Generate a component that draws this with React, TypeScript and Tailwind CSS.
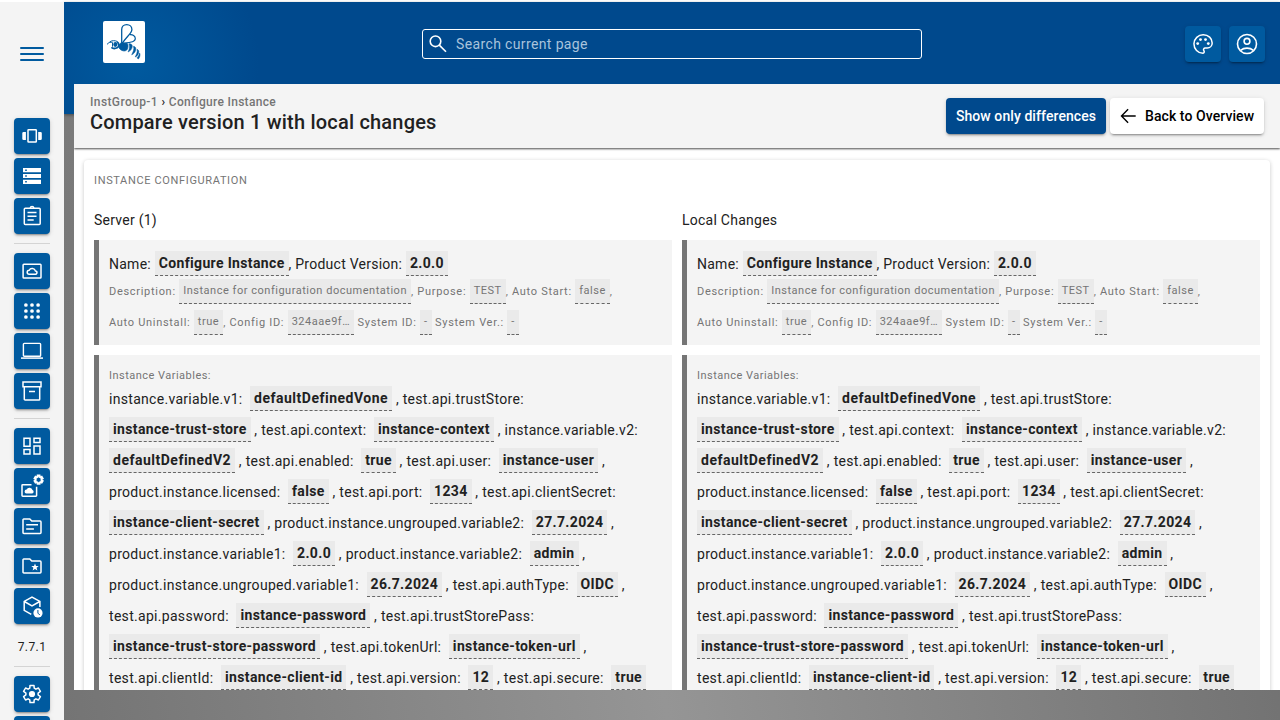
import type { ReactNode } from 'react';

function Icon({ children, width = 1.4 }: { children: ReactNode; width?: number }) {
  return (
    <svg width="24" height="24" viewBox="0 0 24 24" fill="none" stroke="currentColor" strokeWidth={width} className="shrink-0 overflow-visible">
      {children}
    </svg>
  );
}

function gearPath(outer: number, inner: number, tooth: number, valley: number) {
  const points: string[] = [];
  for (let k = 0; k < 6; k++) {
    const corners: [number, number][] = [[-valley, inner], [-tooth, outer], [tooth, outer], [valley, inner]];
    corners.forEach(([offset, radius]) => {
      const angle = ((60 * k + offset) * Math.PI) / 180;
      points.push(`${(radius * Math.sin(angle)).toFixed(2)} ${(-radius * Math.cos(angle)).toFixed(2)}`);
    });
  }
  return `M${points.join('L')}Z`;
}

const carousel = (
  <Icon width={1.5}>
    <rect x="8" y="5.7" width="8.3" height="12.4" rx="0.6" />
    <path d="M2.3 9.3A1.300 1.300 0 0 1 3.600 8H5.900v8H3.600a1.300 1.300 0 0 1-1.300-1.300zM18.200 8h2.300a1.300 1.300 0 0 1 1.300 1.300v5.400a1.300 1.300 0 0 1-1.300 1.300h-2.300z" fill="currentColor" stroke="none" />
  </Icon>
);

const storage = (
  <Icon>
    <path
      d="M3 4h18v4.300H3zM3 9.900h18v4.200H3zM3 15.700h18V20H3zM5.200 5.400v1.600h1.600V5.400zM5.200 11.200v1.600h1.600v-1.600zM5.200 17v1.600h1.600V17z"
      fill="currentColor"
      fillRule="evenodd"
      stroke="none"
    />
  </Icon>
);

const clipboard = (
  <Icon width={1.5}>
    <rect x="4.3" y="4.2" width="15.9" height="16.2" rx="1" />
    <path d="M10.200 4a1.900 1.900 0 0 1 3.700 0M7.500 8.500h9M7.500 12.300h9M7.500 16.100h6.200" />
  </Icon>
);

const cloudWindow = (
  <Icon width={1.5}>
    <rect x="3.1" y="5.3" width="17.9" height="13.7" rx="0.8" />
    <path d="M9.200 15.300h5.900a1.700 1.700 0 0 0 .3-3.400 3.300 3.300 0 0 0-6.200-.6 2 2 0 0 0 0 4z" />
  </Icon>
);

const apps = (
  <Icon>
    {[6, 12, 18].map((y) => [5.9, 12, 18.1].map((x) => <circle key={`${x}-${y}`} cx={x} cy={y} r="1.85" fill="currentColor" stroke="none" />))}
  </Icon>
);

const laptop = (
  <Icon>
    <rect x="3.4" y="4.4" width="17.2" height="12.9" rx="0.9" />
    <path d="M1 19.100h22" strokeWidth="1.5" />
  </Icon>
);

const archive = (
  <Icon width={1.5}>
    <path d="M3 3h18v4.700H3zM4.300 7.700V20.200a.8.800 0 0 0 .8.800h13.800a.8.800 0 0 0 .8-.8V7.700M9 12.500h6" />
  </Icon>
);

const dashboard = (
  <Icon width={1.5}>
    <path d="M4 4.200h6v8H4zM14 4.200h6v4.400h-6zM4 15.600h6v4.400H4zM14 12h6v8h-6z" />
  </Icon>
);

const cloudGear = (
  <Icon width={1.5}>
    <path d="M11.500 10.700H2.700a.7.700 0 0 0-.7.700v10.100a.7.700 0 0 0 .7.700h13.200a.7.700 0 0 0 .7-.7v-8.700" />
    <path d="M6.400 19.400h5.700a1.700 1.700 0 0 0 .4-3.300 3.100 3.100 0 0 0-5.900-.5 1.900 1.900 0 0 0-.2 3.800z" fill="currentColor" stroke="none" />
    <path d={gearPath(4.2, 3, 13, 21)} transform="translate(18.6 5.7)" strokeWidth="2" />
  </Icon>
);

const topic = (
  <Icon width={1.5}>
    <path d="M3 6.200V18.500a.9.900 0 0 0 .9.900h16.200a.9.900 0 0 0 .9-.9V8a.9.900 0 0 0-.9-.9h-8.300L9.800 5H3.900a.9.900 0 0 0-.9 1.200zM6.200 10.800h11.800M6.200 15h7.700" />
  </Icon>
);

const folderStar = (
  <Icon width={1.5}>
    <path d="M3 6.200V18.100a.9.900 0 0 0 .9.900h16.200a.9.900 0 0 0 .9-.9V8a.9.900 0 0 0-.9-.9h-8.300L9.800 5H3.900a.9.900 0 0 0-.9 1.200z" />
    <path d="M15 9.500l1 2.500 2.700.1-2.100 1.700.8 2.600-2.400-1.500-2.400 1.500.8-2.600-2.100-1.700 2.700-.1z" fill="currentColor" stroke="none" />
  </Icon>
);

const boxClock = (
  <Icon width={1.5}>
    <path d="M11.300 20.400 4.200 16.300V7.400L12 3l7.900 4.400V13M4.300 7.500 12 11.900l7.800-4.400" />
    <circle cx="18" cy="18.9" r="4.6" fill="currentColor" stroke="none" />
    <path d="M17.900 16v3.100l1.900 1.900" stroke="#005a9f" strokeWidth="1" />
  </Icon>
);

const settings = (
  <Icon width={1.5}>
    <path d={gearPath(8.8, 6.2, 13, 21)} transform="translate(12 12)" strokeLinejoin="round" />
    <circle cx="12" cy="12" r="3.1" fill="currentColor" stroke="none" />
  </Icon>
);

const palette = (
  <Icon width={1.5}>
    <path d="M12 21.200a9.200 9.200 0 1 1 .3-18.400c5 0 8.900 3.500 8.900 8.200 0 2.900-2.200 5-5 5h-2a1.700 1.700 0 0 0-1.300 2.800c.7.900.3 2.400-.9 2.400z" />
    <g fill="currentColor" stroke="none">
      <circle cx="6.7" cy="11.6" r="1.4" />
      <circle cx="9.5" cy="7.6" r="1.4" />
      <circle cx="14.5" cy="7.6" r="1.4" />
      <circle cx="17.3" cy="11.6" r="1.4" />
    </g>
  </Icon>
);

const account = (
  <Icon width={1.6}>
    <circle cx="12" cy="12" r="9.5" />
    <circle cx="12" cy="9.3" r="2.9" />
    <path d="M5.600 18.400c1.800-1.500 4-2.300 6.400-2.300s4.600.8 6.400 2.300" />
  </Icon>
);

function BeeLogo() {
  return (
    <svg width="42" height="42" viewBox="0 0 42 42" className="rounded-[2px] bg-white text-[#005a9f]" fill="none" stroke="currentColor">
      <path d="M18.700 22.300V8.500c0-3 2-4.900 5-4.900s5.200 2 5.200 4.900c0 4.200-6.700 8-9.300 13.600" strokeWidth="1.3" />
      <path d="M26.700 13.700c3-.4 5.600 1.200 5.600 3.900 0 3.200-3.300 3.600-12.300 4.700" strokeWidth="1.2" />
      <path d="M4 23.400c1.500-1.900 3.600-2.600 5.600-2M6.600 20.900c2.600-1.700 5.300-1.500 8-.3" strokeWidth="1" />
      <path d="M8.400 26.300c1.200 1.100 4 1.300 5.800.5 2.100-.9 2.100-4.600 0-5.800" strokeWidth="1.8" />
      <ellipse cx="12.3" cy="23.5" rx="2" ry="2.4" fill="currentColor" stroke="none" />
      <path d="M9.500 21.700v4" strokeWidth="1" />
      <path d="M17.500 22.300c1.700-.6 5.200.2 6.700.2 1.100 1 .9 3.800.3 5.300-.7 1.800-2.400 2.300-4.400 2-2-.4-3.600-1.700-4.100-3.300-.4-1.600.1-3.500 1.500-4.200z" fill="currentColor" stroke="currentColor" strokeWidth="0.8" />
      <path
        d="M26 22.700c2.600-.2 3.600 1.300 3.200 3.400-.4 2.200-2 4.100-4.200 4.900 1.300-2.600 2.300-5.300 1-8.300zM30.500 25.300c2.300.4 2.800 2.100 2.100 4.200-.6 1.900-2 3.500-3.900 4.300 1.100-2.600 2.900-5.300 1.800-8.500zM34 28.300c1.900.7 2.200 2.300 1.500 4.100-.6 1.600-1.700 2.900-3.300 3.600 1-2.400 2.700-4.800 1.800-7.700zM36.600 32c.9 1.600.3 4.300-1.200 6-.7-.3-1.200-.8-1.300-1.300 1.200-1.300 2.200-2.900 2.500-4.700z"
        fill="currentColor"
        stroke="currentColor"
        strokeWidth="0.5"
      />
    </svg>
  );
}

function IconButton({ children }: { children: ReactNode }) {
  return (
    <button className="flex size-9 shrink-0 items-center justify-center rounded bg-[#005a9f] text-white shadow-[0_3px_1px_-2px_rgba(0,0,0,.2),0_2px_2px_0_rgba(0,0,0,.14),0_1px_5px_0_rgba(0,0,0,.12)]">
      {children}
    </button>
  );
}

function Divider() {
  return <div className="my-[5px] h-px w-9 shrink-0 bg-[#d4d4d4]" />;
}

function Sidebar() {
  return (
    <aside className="z-10 flex w-16 shrink-0 flex-col items-center overflow-hidden bg-[#f4f4f4]">
      <div className="mt-[45px] mb-[57px] flex w-6 shrink-0 flex-col gap-1">
        <div className="h-0.5 rounded bg-[#005a9f]" />
        <div className="h-0.5 rounded bg-[#005a9f]" />
        <div className="h-0.5 rounded bg-[#005a9f]" />
      </div>
      <div className="flex flex-col items-center gap-1">
        <IconButton>{carousel}</IconButton>
        <IconButton>{storage}</IconButton>
        <IconButton>{clipboard}</IconButton>
        <Divider />
        <IconButton>{cloudWindow}</IconButton>
        <IconButton>{apps}</IconButton>
        <IconButton>{laptop}</IconButton>
        <IconButton>{archive}</IconButton>
        <Divider />
        <IconButton>{dashboard}</IconButton>
        <IconButton>{cloudGear}</IconButton>
        <IconButton>{topic}</IconButton>
        <IconButton>{folderStar}</IconButton>
        <IconButton>{boxClock}</IconButton>
        <div className="mt-[9px] h-5 text-[12px] leading-5 tracking-[0.4px] text-[#212121]">7.7.1</div>
        <Divider />
        <IconButton>{settings}</IconButton>
        <IconButton>{apps}</IconButton>
      </div>
    </aside>
  );
}

function Value({ children, strong = false }: { children: ReactNode; strong?: boolean }) {
  return (
    <span
      className={
        strong
          ? 'inline-block h-[25px] border-b border-dashed border-[#666] bg-[#eaeaea] px-1 align-[1px] leading-6 font-bold tracking-[0.35px] text-[#212121]'
          : 'inline-block h-[25px] border-b border-dashed border-[#666] bg-[#eaeaea] px-1 align-[1px] leading-6 tracking-[0.52px]'
      }
    >
      {children}
    </span>
  );
}

const variables: [string, string][] = [
  ['instance.variable.v1', 'defaultDefinedVone'],
  ['test.api.trustStore', 'instance-trust-store'],
  ['test.api.context', 'instance-context'],
  ['instance.variable.v2', 'defaultDefinedV2'],
  ['test.api.enabled', 'true'],
  ['test.api.user', 'instance-user'],
  ['product.instance.licensed', 'false'],
  ['test.api.port', '1234'],
  ['test.api.clientSecret', 'instance-client-secret'],
  ['product.instance.ungrouped.variable2', '27.7.2024'],
  ['product.instance.variable1', '2.0.0'],
  ['product.instance.variable2', 'admin'],
  ['product.instance.ungrouped.variable1', '26.7.2024'],
  ['test.api.authType', 'OIDC'],
  ['test.api.password', 'instance-password'],
  ['test.api.trustStorePass', 'instance-trust-store-password'],
  ['test.api.tokenUrl', 'instance-token-url'],
  ['test.api.clientId', 'instance-client-id'],
  ['test.api.version', '12'],
  ['test.api.secure', 'true'],
];

function Column({ title }: { title: string }) {
  return (
    <div className="flex w-[578px] flex-col gap-2.5">
      <div className="h-5 text-[14px] leading-5">{title}</div>
      <section className="h-[105px] border-l-[5px] border-[#757575] bg-[#f4f4f4] px-2.5 pt-[9px]">
        <div className="h-[27px] leading-[31px]">
          Name: <Value strong>Configure Instance</Value>, Product Version: <Value strong>2.0.0</Value>
        </div>
        <div className="text-[11px] leading-[31px] tracking-[0.7px] text-[#757575]">
          Description: <Value>Instance for configuration documentation</Value>, Purpose: <Value>TEST</Value>, Auto Start:{' '}
          <Value>false</Value>, <br />
          Auto Uninstall: <Value>true</Value>, Config ID: <Value>324aae9f…</Value> System ID: <Value>-</Value> System Ver.:{' '}
          <Value>-</Value>
        </div>
      </section>
      <section className="border-l-[5px] border-[#757575] bg-[#f4f4f4] px-2.5 pt-[11px]">
        <div className="h-[18px] text-[11px] leading-5 tracking-[0.48px] text-[#757575]">Instance Variables:</div>
        <div className="leading-[31px] tracking-[0.3px]">
          {variables.map(([name, value]) => (
            <span key={name}>
              {name}:&nbsp; <Value strong>{value.startsWith('default') ? <span className="tracking-[0.5px]">{value}</span> : value}</Value>
              {name === 'test.api.secure' ? '' : ' , '}
            </span>
          ))}
        </div>
      </section>
    </div>
  );
}

function Header() {
  return (
    <header className="flex h-[82px] shrink-0 items-center pt-0.5">
      <div className="mb-1 ml-[39px]">
        <BeeLogo />
      </div>
      <div className="ml-[277px] flex h-[30px] w-[500px] items-center gap-[6px] rounded-[3px] border border-white pl-[3px] text-white">
        <Icon width={1.6}>
          <circle cx="9.5" cy="9.3" r="5.3" />
          <path d="M13.300 13.100 20 19.800" />
        </Icon>
        <span className="text-[14px] tracking-[0.37px] text-[#a9c3dc]">Search current page</span>
      </div>
      <div className="mr-[15px] ml-auto flex gap-2">
        <IconButton>{palette}</IconButton>
        <IconButton>{account}</IconButton>
      </div>
    </header>
  );
}

export default function App() {
  return (
    <div className="flex h-[720px] w-[1280px] overflow-hidden bg-white pt-0.5 font-[Roboto,sans-serif] text-[14px] tracking-[0.25px] text-[#212121]">
      <Sidebar />
      <div className="relative flex min-w-0 flex-1 flex-col bg-[linear-gradient(80deg,#747474_0%,#959595_45%,#6c6c6c_100%)]">
        <div className="absolute inset-x-0 top-0 h-28 bg-[#00498d] bg-[radial-gradient(circle_at_70px_60px,#005a9f_0px,#00498d_125px)] shadow-[0_1px_3px_rgba(0,0,0,.4)]" />
        <div className="relative flex min-h-0 flex-1 flex-col">
          <Header />
          <main className="mb-[30px] ml-2.5 flex min-h-0 flex-1 flex-col overflow-hidden bg-white">
            <div className="z-10 flex h-16 shrink-0 justify-between bg-[#f4f4f4] pr-4 pl-4 shadow-[0_1px_2px_rgba(0,0,0,.7)]">
              <div className="pt-2.5">
                <div className="h-4 text-[12px] leading-4 font-medium tracking-[0.4px] text-[#757575]">
                  InstGroup-1 <span className="text-[#212121]">›</span> <span className="tracking-[0.3px]">Configure Instance</span>
                </div>
                <div className="text-[20px] leading-6 font-medium tracking-[0.2px]">Compare version 1 with local changes</div>
              </div>
              <div className="flex gap-1 pt-3.5 text-[14px] font-medium tracking-[0.08px]">
                <button className="h-9 w-40 rounded bg-[#00498d] text-white shadow-[0_3px_1px_-2px_rgba(0,0,0,.2),0_2px_2px_0_rgba(0,0,0,.14),0_1px_5px_0_rgba(0,0,0,.12)]">
                  Show only differences
                </button>
                <button className="flex h-9 w-[154px] items-center gap-[5px] rounded bg-white pl-1.5 text-black shadow-[0_3px_1px_-2px_rgba(0,0,0,.2),0_2px_2px_0_rgba(0,0,0,.14),0_1px_5px_0_rgba(0,0,0,.12)]">
                  <Icon>
                    <path d="M19.700 12H5.700M12.100 5.300 5.500 12l6.600 6.700" />
                  </Icon>
                  Back to Overview
                </button>
              </div>
            </div>
            <section className="mx-2.5 mt-3 rounded px-2.5 pt-[11px] shadow-[0_1px_4px_rgba(0,0,0,.22)]">
              <div className="h-[39px] text-[11px] leading-5 tracking-[0.65px] text-[#757575]">INSTANCE CONFIGURATION</div>
              <div className="flex gap-2.5">
                <Column title="Server (1)" />
                <Column title="Local Changes" />
              </div>
            </section>
          </main>
        </div>
      </div>
    </div>
  );
}
